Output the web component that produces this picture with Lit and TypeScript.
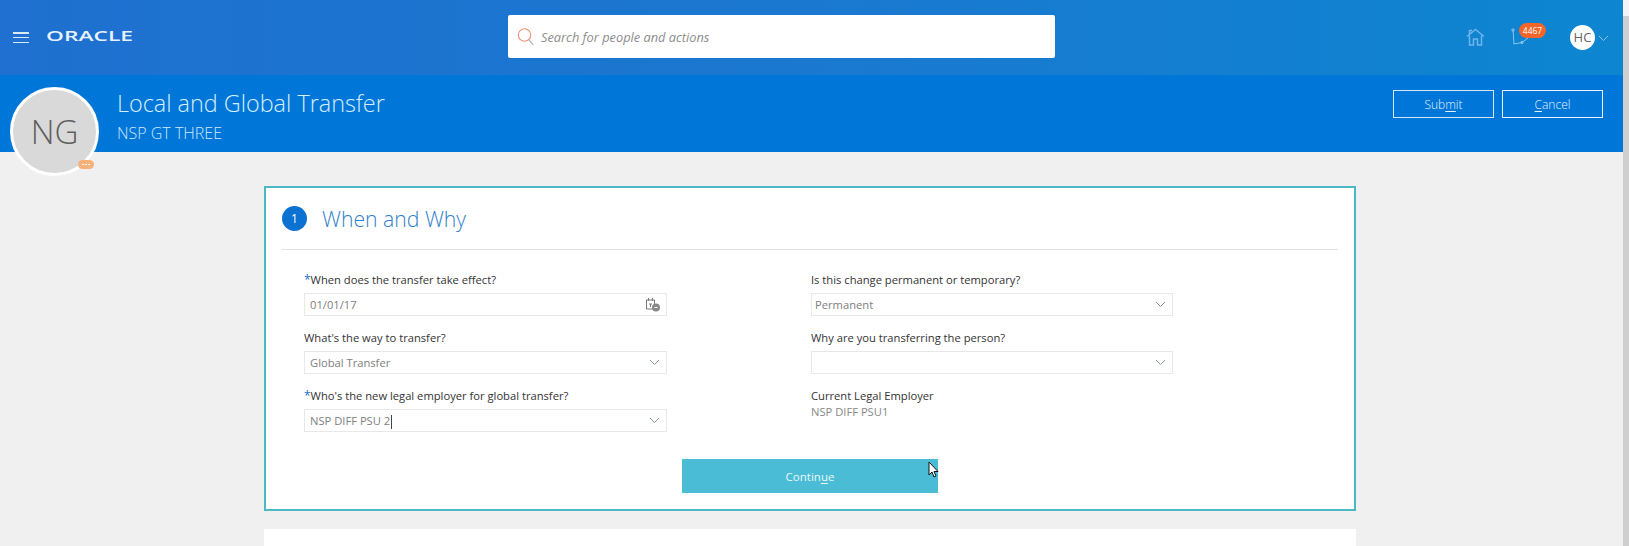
import { LitElement, html, css, svg } from "lit";
import { customElement } from "lit/decorators.js";

const chevron = svg`<svg class="chev" width="11" height="7" viewBox="0 0 11 7"><path d="M1 1l4.500 4.500L10 1" fill="none" stroke="#8a949c" stroke-width="1"/></svg>`;

@customElement("app-root")
export class AppRoot extends LitElement {
  static styles = css`
    :host { display: block; width: 1629px; height: 546px; overflow: hidden; position: relative; background: #f0f0f0; font-family: "Open Sans", "Noto Sans", sans-serif; color: #333; }
    .page { width: 1623px; }
    .top { height: 75px; display: flex; align-items: center; background: linear-gradient(90deg, #1f70d0, #1a78d0 50%, #0d86d0); position: relative; }
    .burger { margin-left: 13px; width: 16px; height: 11px; display: flex; flex-direction: column; justify-content: space-between; }
    .burger i { display: block; height: 1.5px; background: #d9e9f8; }
    .logo { margin: 0 0 5px 17px; width: 92px; height: 20px; display: block; }
    .search { position: absolute; left: 508px; top: 15px; width: 547px; height: 43px; background: #fff; border-radius: 2px; display: flex; align-items: center; }
    .search svg { margin-left: 9px; }
    .search span { margin-left: 6px; font-style: italic; font-size: 12.8px; color: #8d8d8d; }
    .icon-home { position: absolute; left: 1466px; top: 28px; }
    .icon-note { position: absolute; left: 1511px; top: 27px; }
    .badge { position: absolute; left: 1519px; top: 23px; width: 27px; height: 15px; border-radius: 8px; background: #f4652a; color: #fff; font-size: 8.5px; line-height: 15px; text-align: center; }
    .hc { position: absolute; left: 1570px; top: 25px; width: 25px; height: 25px; border-radius: 50%; background: #fff; color: #666; font-size: 13px; line-height: 25px; text-align: center; }
    .hc-chev { position: absolute; left: 1598px; top: 35px; }
    .band { height: 77px; background: #0076d9; display: flex; align-items: flex-start; justify-content: space-between; position: relative; }
    .titles { margin-left: 117px; padding-top: 13px; color: #cfe9fb; }
    .titles h1 { margin: 0; font-weight: 300; font-size: 23.4px; line-height: 30px; color: #d6effc; }
    .titles p { margin: 6px 0 0; font-weight: 300; font-size: 16px; line-height: 19px; }
    .actions { display: flex; gap: 8px; margin: 15px 20px 0 0; }
    .actions button { width: 101px; height: 28px; background: transparent; border: 1px solid #cfe6f8; color: #e6f4fc; font: 300 12px "Open Sans", sans-serif; padding: 0; }
    .actions button + button { border-color: #e6f2fb; }
    u { text-underline-offset: 2px; }
    .avatar { position: absolute; left: 10px; top: 87px; width: 89px; height: 89px; box-sizing: border-box; border-radius: 50%; background: #d9d9d9; border: 3.5px solid #fff; color: #5f5f5f; font-size: 33px; font-weight: 300; display: flex; align-items: center; justify-content: center; }
    .more { position: absolute; left: 78px; top: 160px; width: 16px; height: 9px; border-radius: 5px; background: #f6b27a; display: flex; gap: 1.5px; align-items: center; justify-content: center; }
    .more i { width: 1.5px; height: 1.5px; background: #fff; border-radius: 50%; }
    .main { display: flex; flex-direction: column; align-items: center; padding: 34px 3px 0 0; }
    .card { width: 1092px; height: 325px; box-sizing: border-box; background: #fff; border: 2px solid #4cb8c4; padding: 0 16px; display: flex; flex-direction: column; }
    .head { height: 62px; flex: none; display: flex; align-items: center; border-bottom: 1px solid #e0e0e0; box-sizing: border-box; }
    .num { width: 25px; height: 25px; border-radius: 50%; background: #0b72d2; color: #fff; font-size: 12px; display: flex; align-items: center; justify-content: center; }
    .head h2 { margin: 0 0 0 15px; font-weight: 300; font-size: 21.2px; color: #2f80c9; }
    .grid { display: grid; grid-template-columns: 363px 362px; column-gap: 144px; padding: 22px 0 0 22px; row-gap: 14px; }
    .grid > :nth-child(even) .box { padding-left: 3px; }
    label { display: block; font-size: 11.2px; line-height: 16px; color: #333; height: 21px; white-space: nowrap; position: relative; }
    label b { color: #1c6fc4; font-weight: 400; font-size: 12px; }
    .box { height: 23px; box-sizing: border-box; border: 1px solid #e8e8e8; display: flex; align-items: center; justify-content: space-between; padding: 0 5px; font-size: 11.2px; color: #808080; }
    .chev { flex: none; margin-right: 1px; }
    .caret { display: inline-block; width: 1px; height: 14px; background: #444; vertical-align: middle; margin-left: 1px; }
    .static { font-size: 11.2px; line-height: 16px; color: #888; margin-top: -5px; }
    .cont { margin: 27px 0 0 400px; width: 256px; height: 34px; flex: none; background: #4bbcd5; color: #e9f7fb; font-size: 11.5px; display: flex; align-items: center; justify-content: center; position: relative; }
    .cursor { position: absolute; left: 246px; top: 2px; }
    .card2 { width: 1092px; height: 30px; background: #fff; margin-top: 18px; }
    .scroll { position: absolute; right: 0; top: 0; bottom: 0; width: 6px; background: #cfcfcf; }
    .scroll i { display: block; height: 16px; background: #f4f4f4; }
  `;

  private field(label: string, req: boolean, value: unknown, icon: unknown) {
    return html`<div><label>${req ? html`<b>*</b>` : ""}${label}</label><div class="box"><span>${value}</span>${icon}</div></div>`;
  }

  render() {
    const cal = svg`<svg width="16" height="15" viewBox="0 0 16 15"><path d="M1.500 3h8v9h-8zM3.500 1v3M7.500 1v3M4 7h3M5.500 7v3" fill="none" stroke="#777" stroke-width="1"/><circle cx="11" cy="10.500" r="4" fill="#888"/><path d="M9.500 10.500h3" stroke="#fff"/></svg>`;
    return html`
      <div class="page">
        <div class="top">
          <div class="burger"><i></i><i></i><i></i></div>
          <svg class="logo" viewBox="0 0 92 20"><text x="0" y="15.500" font-family="Open Sans, sans-serif" font-size="15" font-weight="600" fill="#e8f2fb" textLength="87" lengthAdjust="spacingAndGlyphs">ORACLE</text></svg>
          <div class="search">
            <svg width="18" height="20" viewBox="0 0 18 20"><circle cx="7.500" cy="8" r="6.200" fill="none" stroke="#ee8f78" stroke-width="1.100"/><path d="M11.800 12.800l4.400 5" stroke="#b0b0b0" stroke-width="1.200"/></svg>
            <span>Search for people and actions</span>
          </div>
          <svg class="icon-home" width="19" height="18" viewBox="0 0 19 18"><path d="M1 8.500l8.500-7 8.500 7M3.500 7.500v9.500h4v-6h4v6h4V7.500M3.500 6V2.500h2.500" fill="none" stroke="#6fb4ea" stroke-width="1.500"/></svg>
          <svg class="icon-note" width="20" height="20" viewBox="0 0 20 20"><path d="M2 3l1 14 8-1.500 6-4.500" fill="none" stroke="#8cc4ee" stroke-width="1"/><circle cx="2" cy="3" r="1.200" fill="none" stroke="#8cc4ee"/><circle cx="11" cy="15.500" r="1.200" fill="none" stroke="#8cc4ee"/></svg>
          <div class="badge">4467</div>
          <div class="hc">HC</div>
          <svg class="hc-chev" width="11" height="7" viewBox="0 0 11 7"><path d="M1 1l4.500 4.500L10 1" fill="none" stroke="#8cc4ee"/></svg>
        </div>
        <div class="band">
          <div class="titles"><h1>Local and Global Transfer</h1><p>NSP GT THREE</p></div>
          <div class="actions"><button>Sub<u>m</u>it</button><button><u>C</u>ancel</button></div>
        </div>
        <div class="main">
          <div class="card">
            <div class="head"><div class="num">1</div><h2>When and Why</h2></div>
            <div class="grid">
              ${this.field("When does the transfer take effect?", true, "01/01/17", cal)}
              ${this.field("Is this change permanent or temporary?", false, "Permanent", chevron)}
              ${this.field("What's the way to transfer?", false, "Global Transfer", chevron)}
              ${this.field("Why are you transferring the person?", false, "", chevron)}
              ${this.field("Who's the new legal employer for global transfer?", true, html`NSP DIFF PSU 2<span class="caret"></span>`, chevron)}
              <div><label>Current Legal Employer</label><div class="static">NSP DIFF PSU1</div></div>
            </div>
            <div class="cont">Contin<u>u</u>e
              <svg class="cursor" width="11" height="18" viewBox="0 0 11 18"><path d="M1 1v13l3-3 2 5 2-1-2-4.500h4z" fill="#fff" stroke="#111" stroke-width="1"/></svg>
            </div>
          </div>
          <div class="card2"></div>
        </div>
      </div>
      <div class="avatar">NG</div>
      <div class="more"><i></i><i></i><i></i></div>
      <div class="scroll"><i></i></div>
    `;
  }
}
